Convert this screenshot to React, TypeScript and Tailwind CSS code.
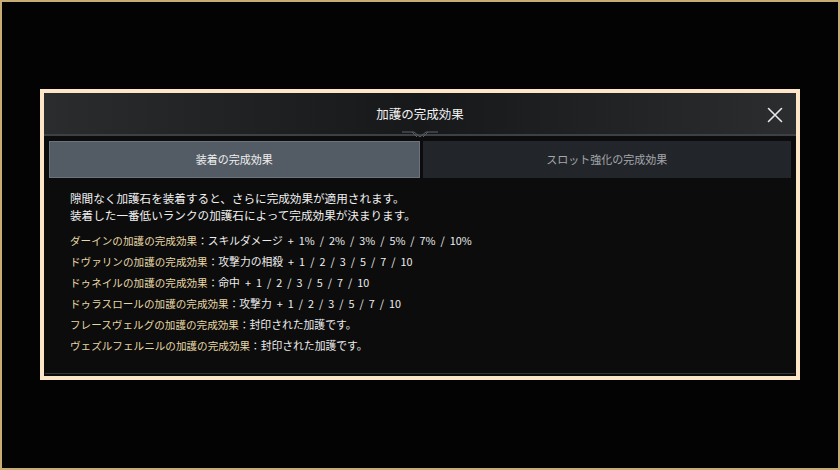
const font = { fontFamily: '"Noto Sans CJK JP", "Noto Sans", sans-serif' };

const effects = [
  { name: "ダーインの加護の完成効果", value: "スキルダメージ + 1% / 2% / 3% / 5% / 7% / 10%" },
  { name: "ドヴァリンの加護の完成効果", value: "攻撃力の相殺 + 1 / 2 / 3 / 5 / 7 / 10" },
  { name: "ドゥネイルの加護の完成効果", value: "命中 + 1 / 2 / 3 / 5 / 7 / 10" },
  { name: "ドゥラスロールの加護の完成効果", value: "攻撃力 + 1 / 2 / 3 / 5 / 7 / 10" },
  { name: "フレースヴェルグの加護の完成効果", value: "封印された加護です。" },
  { name: "ヴェズルフェルニルの加護の完成効果", value: "封印された加護です。" },
];

function CloseIcon() {
  return (
    <svg width="16" height="16" viewBox="0 0 16 16" className="text-[#e8e8e8]">
      <path d="M1.5 1.5 L14.5 14.5 M14.5 1.5 L1.5 14.5" stroke="currentColor" strokeWidth="1.6" strokeLinecap="round" />
    </svg>
  );
}

function Ornament() {
  return (
    <svg width="40" height="8" viewBox="0 0 40 8" className="absolute left-1/2 top-[-3px] -translate-x-1/2">
      <path d="M2 1 L14 1 L20 6 L26 1 L38 1" stroke="#5c6166" strokeWidth="1" fill="none" />
      <path d="M12 1 L17 6 M28 1 L23 6" stroke="#5c6166" strokeWidth="1" fill="none" />
    </svg>
  );
}

export default function App() {
  return (
    <div className="h-[470px] w-[840px] bg-[#c5ad74] p-[2px]" style={font}>
      <div className="flex h-full w-full justify-center bg-[#030303] pt-[87px]">
        <div className="flex h-[291px] w-[760px] flex-col border-4 border-[#fde6c7] bg-[#0c0c0c]">
          <div className="relative flex h-[41px] items-center justify-center bg-gradient-to-r from-[#2a2c2e] via-[#17181a] to-[#2b2d2f]">
            <span className="mt-[2px] text-[12.5px] text-[#f2f2f2]">加護の完成効果</span>
            <div className="absolute right-[13px] top-[14px]">
              <CloseIcon />
            </div>
          </div>
          <div className="relative h-[2px] bg-[#3d4145]">
            <Ornament />
          </div>
          <div className="mt-[5px] flex gap-[3px] px-[5px]">
            <div className="flex h-[37px] flex-1 items-center justify-center border border-[#6b737c] bg-[#535b64] text-[11px] text-[#eeeeee]">
              装着の完成効果
            </div>
            <div className="flex h-[37px] flex-1 items-center justify-center bg-[#22262b] text-[11px] text-[#a5a7aa]">
              スロット強化の完成効果
            </div>
          </div>
          <div className="mx-[1px] mb-[2px] flex flex-1 flex-col border-b border-[#34363a] pl-[25px] pt-[12px]">
            <p className="text-[11.6px] leading-[17px] text-[#f0f0f0]">
              隙間なく加護石を装着すると、さらに完成効果が適用されます。
              <br />
              装着した一番低いランクの加護石によって完成効果が決まります。
            </p>
            <ul className="mt-[6px] flex flex-col">
              {effects.map((e) => (
                <li key={e.name} className="h-[21px] text-[10.6px] leading-[21px] text-[#ececec] [word-spacing:2.6px]">
                  <span className="text-[#e6d7a6]">{e.name}</span>：<span className="text-[10.8px]">{e.value}</span>
                </li>
              ))}
            </ul>
          </div>
        </div>
      </div>
    </div>
  );
}
